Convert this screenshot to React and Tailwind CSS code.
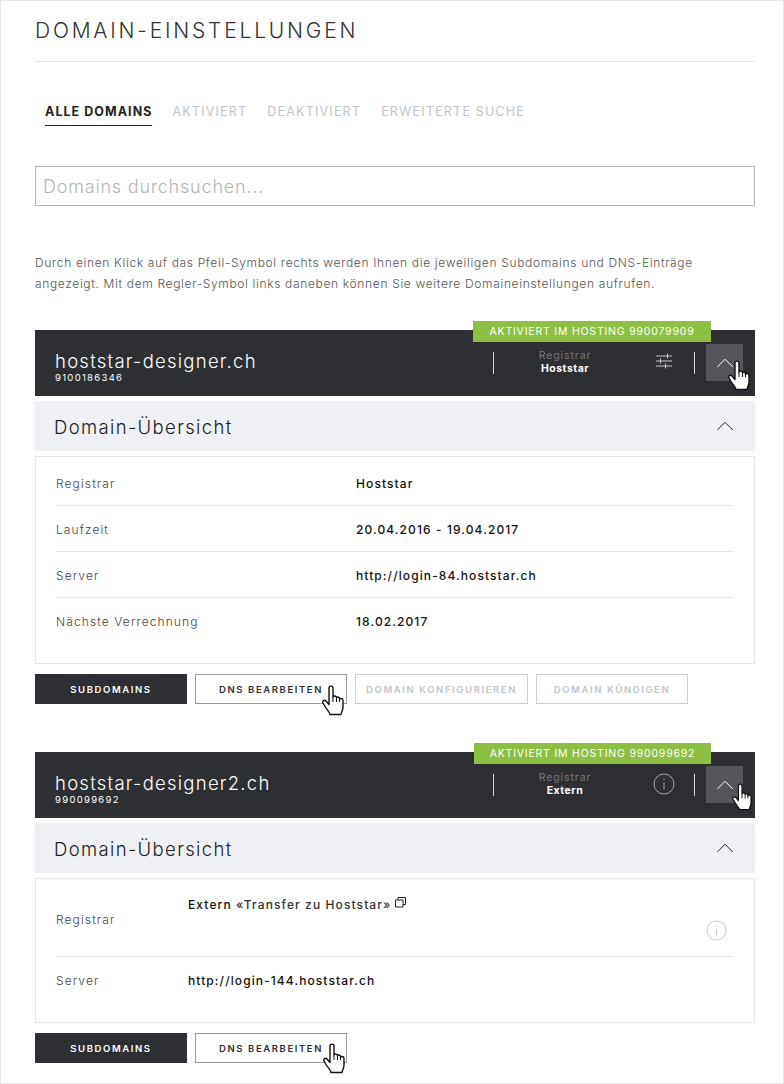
import React from 'react';
import { ChevronUp } from 'lucide-react';

const Hand = ({ className, w = 22, h = 31 }) => (
  <svg
    width={w}
    height={h}
    viewBox="0 0 22 31"
    fill="#ffffff"
    stroke="#111111"
    strokeWidth="1.4"
    strokeLinejoin="round"
    className={`absolute pointer-events-none ${className}`}
  >
    <path d="M7 3C7 0.500 11 0.500 11 3V12C11 10.500 14.500 10.500 14.500 12.500V13C14.500 11.500 17.500 11.500 17.500 13.500V14.500C17.500 13 21 13 21 15.500V22C21 25 19.500 26.500 19 29.500H8C7.500 27 5.500 25.500 3 21.500L1 18C0 16 2.500 14.500 4 16L7 19.500Z" />
    <path d="M11 12V17M14.500 13V17M17.500 14.500V17" fill="none" strokeWidth="1" />
  </svg>
);

const Sliders = () => (
  <svg width="18" height="16" viewBox="0 0 18 16" fill="none" stroke="#c9c9cb" strokeWidth="1">
    <path d="M1 3h16M1 8h16M1 13h16M12.500 0.500v5M5.500 5.500v5M10.500 10.500v5" />
  </svg>
);

const Info = ({ size, color }) => (
  <svg width={size} height={size} viewBox="0 0 22 22" fill="none" stroke={color} strokeWidth="1">
    <circle cx="11" cy="11" r="10" />
    <path d="M11 9.500v7M11 5.500v1.500" />
  </svg>
);

const CopyIcon = () => (
  <svg width="11" height="11" viewBox="0 0 11 11" fill="none" stroke="#222" strokeWidth="1" className="ml-[4px] mb-[6px] inline-block">
    <path d="M3 3V0.500h7.500V7.500H8M0.500 3h7.500v7H0.500z" />
  </svg>
);

const Header = ({ name, id, hosting, badgeWidth, registrar, icon, handClass, handW, handH }) => (
  <div className="relative h-[66px] bg-[#2e2f33] flex items-center pl-[20px]">
    <div className={`absolute top-[-9px] right-[44px] h-[21px] bg-[#8cbf42] text-white text-[10.500px] tracking-[0.8px] flex items-center justify-center ${badgeWidth}`}>
      AKTIVIERT IM HOSTING {hosting}
    </div>
    <div className="flex-1 text-white pt-[7px]">
      <div className="text-[18.500px] leading-[22px] font-light tracking-[1.25px]">{name}</div>
      <div className="text-[9.500px] leading-[12px] tracking-[1.3px]">{id}</div>
    </div>
    <div className="w-px h-[22px] bg-[#d5d5d5]" />
    <div className="w-[140px] pl-[2px] text-center text-[10.500px] leading-[13px] pb-[2px]">
      <div className="text-[#77787c] tracking-[0.9px]">Registrar</div>
      <div className="text-white font-bold tracking-[0.5px]">{registrar}</div>
    </div>
    <div className="w-[60px] flex items-center justify-center">{icon}</div>
    <div className="w-px h-[22px] bg-[#d5d5d5]" />
    <div className="relative ml-[11px] mr-[12px] mb-[1px] w-[37px] h-[37px] bg-[#55565b] flex items-center justify-center">
      <ChevronUp size={30} strokeWidth={0.8} color="#ffffff" />
      <Hand className={handClass} w={handW} h={handH} />
    </div>
  </div>
);

const Strip = () => (
  <div className="mt-[5px] h-[50px] bg-[#eff0f4] flex items-center justify-between pl-[19px] pr-[15px]">
    <span className="pt-[4px] text-[18.500px] font-light tracking-[1.35px] text-[#222]">Domain-Übersicht</span>
    <ChevronUp size={30} strokeWidth={0.8} color="#222222" />
  </div>
);

const Row = ({ label, value, last }) => (
  <div className={`h-[46px] pt-[2px] flex items-center text-[12px] tracking-[1.1px] ${last ? '' : 'border-b border-[#e6e6e6]'}`}>
    <div className="w-[300px] text-[#444] font-light">{label}</div>
    <div className="text-[#111] font-medium">{value}</div>
  </div>
);

const Btn = ({ w, kind, children, handClass }) => {
  const styles = {
    dark: 'bg-[#2e2f33] text-white',
    line: 'border border-[#9a9a9a] text-[#2e2f33]',
    off: 'border border-[#cfcfcf] text-[#c4c5ca]',
  };
  return (
    <div className={`relative h-[30px] pt-[2px] ${w} ${styles[kind]} flex items-center justify-center text-[9.500px] font-semibold tracking-[1.6px]`}>
      {children}
      {handClass && <Hand className={handClass} />}
    </div>
  );
};

export default function App() {
  return (
    <div className="w-[784px] h-[1084px] overflow-hidden bg-white border border-[#e8e8e8] pl-[34px] pr-[28px] font-['Inter',sans-serif]">
      <h1 className="pt-[17px] pb-[18px] border-b border-[#e4e4e4] text-[21px] leading-[25px] font-light tracking-[2.8px] text-[#333]">
        DOMAIN-EINSTELLUNGEN
      </h1>

      {/* Tabs */}
      <div className="mt-[40px] pl-[10px] flex gap-[20px] text-[12.500px] leading-[19px] tracking-[1.2px] text-[#c4c5c9]">
        <span className="pb-[3px] h-[24px] border-b border-[#222] font-bold tracking-[1.05px] text-[#222]">ALLE DOMAINS</span>
        <span>AKTIVIERT</span>
        <span>DEAKTIVIERT</span>
        <span>ERWEITERTE SUCHE</span>
      </div>

      <div className="mt-[40px] h-[40px] border border-[#b5b5b5] flex items-center pl-[7px] text-[18px] font-light tracking-[0.8px] text-[#b5b5b5]">
        Domains durchsuchen...
      </div>

      <p className="mt-[46px] text-[12px] leading-[21px] tracking-[0.66px] font-light text-[#555]">
        Durch einen Klick auf das Pfeil-Symbol rechts werden Ihnen die jeweiligen Subdomains und DNS-Einträge<br />
        angezeigt. Mit dem Regler-Symbol links daneben können Sie weitere Domaineinstellungen aufrufen.
      </p>

      {/* Domain 1 */}
      <section className="mt-[36px]">
        <Header
          name="hoststar-designer.ch"
          id="9100186346"
          hosting="990079909"
          badgeWidth="w-[238px]"
          registrar="Hoststar"
          icon={<div className="mb-[4px]"><Sliders /></div>}
          handClass="left-[22px] top-[16px]"
        />
        <Strip />
        <div className="mt-[5px] h-[208px] border border-[#e6e6e6] px-[20px] pt-[3px]">
          <Row label="Registrar" value="Hoststar" />
          <Row label="Laufzeit" value="20.04.2016 - 19.04.2017" />
          <Row label="Server" value="http://login-84.hoststar.ch" />
          <Row label="Nächste Verrechnung" value="18.02.2017" last />
        </div>
        <div className="mt-[10px] flex gap-[8px]">
          <Btn w="w-[152px]" kind="dark">SUBDOMAINS</Btn>
          <Btn w="w-[152px]" kind="line" handClass="left-[126px] top-[10px]">DNS BEARBEITEN</Btn>
          <Btn w="w-[173px]" kind="off">DOMAIN KONFIGURIEREN</Btn>
          <Btn w="w-[152px]" kind="off">DOMAIN KÜNDIGEN</Btn>
        </div>
      </section>

      {/* Domain 2 */}
      <section className="mt-[48px]">
        <Header
          name="hoststar-designer2.ch"
          id="990099692"
          hosting="990099692"
          badgeWidth="w-[237px]"
          registrar="Extern"
          icon={<div className="mb-[3px]"><Info size={22} color="#a5a6a8" /></div>}
          handClass="left-[26px] top-[17px]"
          handW={20}
          handH={28}
        />
        <Strip />
        <div className="mt-[5px] h-[145px] border border-[#e6e6e6] px-[20px] text-[12px] tracking-[1.1px]">
          <div className="relative h-[78px] border-b border-[#e6e6e6] flex">
            <div className="w-[132px] pt-[32px] text-[#444] font-light">Registrar</div>
            <div className="pt-[17px] text-[#111] font-medium">
              Extern <span className="text-[#333]">«Transfer zu Hoststar»</span>
              <CopyIcon />
            </div>
            <div className="absolute right-[7px] top-[41px]"><Info size={21} color="#c9c9c9" /></div>
          </div>
          <div className="h-[48px] flex items-center">
            <div className="w-[132px] text-[#444] font-light">Server</div>
            <div className="text-[#111] font-medium">http://login-144.hoststar.ch</div>
          </div>
        </div>
        <div className="mt-[10px] flex gap-[8px]">
          <Btn w="w-[152px]" kind="dark">SUBDOMAINS</Btn>
          <Btn w="w-[152px]" kind="line" handClass="left-[127px] top-[9px]">DNS BEARBEITEN</Btn>
        </div>
      </section>
    </div>
  );
}
